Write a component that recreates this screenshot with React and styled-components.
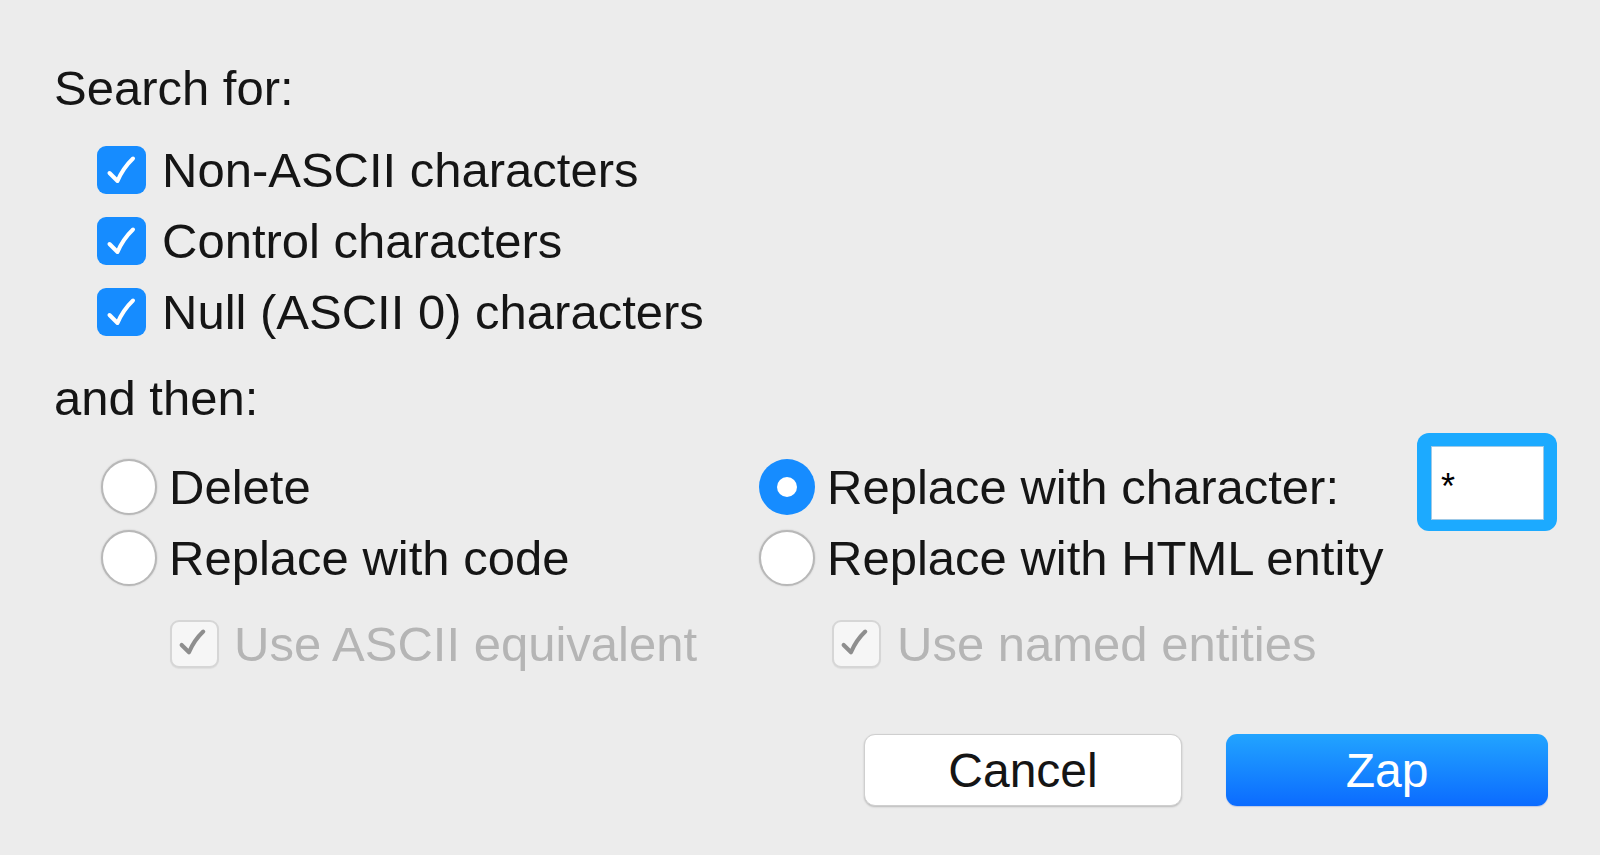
import React from 'react';
import styled, { createGlobalStyle } from 'styled-components';

const GlobalStyle = createGlobalStyle`
  html, body {
    margin: 0;
    padding: 0;
    background: #ececec;
  }
  body {
    font-family: 'Liberation Sans', Arial, Helvetica, sans-serif;
    color: #151515;
    -webkit-font-smoothing: antialiased;
  }
`;

const Dialog = styled.div`
  width: 1600px;
  height: 855px;
  box-sizing: border-box;
  padding: 60px 52px 0 54px;
  font-size: 49px;
`;

const SectionLabel = styled.div`
  height: 56px;
  line-height: 56px;
  margin-top: ${(p) => p.$top || 0}px;
`;

const CheckList = styled.div`
  margin: 18px 0 0 43px;
  display: flex;
  flex-direction: column;
`;

const Row = styled.label`
  display: flex;
  align-items: center;
  height: 71px;
  gap: ${(p) => p.$gap || 16}px;
  margin-top: ${(p) => p.$top || 0}px;
  margin-left: ${(p) => p.$indent || 0}px;
  color: ${(p) => (p.$disabled ? '#b5b5b5' : '#151515')};
  white-space: nowrap;
`;

const Box = styled.span`
  width: 49px;
  height: 48px;
  flex: none;
  box-sizing: border-box;
  border-radius: 9px;
  display: flex;
  align-items: center;
  justify-content: center;
  background: ${(p) => (p.$disabled ? '#f6f6f6' : '#168cff')};
  border: ${(p) => (p.$disabled ? '2px solid #d6d6d6' : 'none')};
  box-shadow: ${(p) => (p.$disabled ? '0 1px 1px rgba(0,0,0,0.06)' : 'none')};
  svg {
    display: block;
  }
`;

const Radio = styled.span`
  width: 56px;
  height: 56px;
  flex: none;
  box-sizing: border-box;
  border-radius: 50%;
  display: flex;
  align-items: center;
  justify-content: center;
  background: ${(p) => (p.$on ? '#168cff' : '#fff')};
  border: ${(p) => (p.$on ? 'none' : '2px solid #b8b8b8')};
  box-shadow: ${(p) => (p.$on ? 'none' : '0 0 2px rgba(0,0,0,0.18)')};

  &::after {
    content: '';
    display: ${(p) => (p.$on ? 'block' : 'none')};
    width: 20px;
    height: 20px;
    border-radius: 50%;
    background: #fff;
  }
`;

const OptionsGrid = styled.div`
  margin: 25px 0 0 47px;
  display: grid;
  grid-template-columns: 658px 1fr auto;
  align-items: start;
`;

const FocusRing = styled.div`
  grid-column: 3;
  grid-row: 1;
  margin: -18px -9px -9px 0;
  padding: 13px 13px 11px 14px;
  background: #1caaff;
  border-radius: 12px;
`;

const CharInput = styled.div`
  width: 113px;
  height: 74px;
  box-sizing: border-box;
  background: #fff;
  border: 1px solid #9fc9e6;
  font-size: 36px;
  line-height: 52px;
  padding: 14px 0 0 9px;
  color: #000;
`;

const ButtonBar = styled.div`
  margin-top: 55px;
  display: flex;
  justify-content: flex-end;
  gap: 44px;
`;

const Button = styled.button`
  width: ${(p) => (p.$primary ? 322 : 318)}px;
  height: 72px;
  box-sizing: border-box;
  border-radius: 11px;
  font-family: inherit;
  font-size: 48px;
  padding: 0;
  cursor: default;
  color: ${(p) => (p.$primary ? '#fff' : '#151515')};
  background: ${(p) =>
    p.$primary ? 'linear-gradient(#22a4ff, #0b6bff)' : '#fff'};
  border: ${(p) => (p.$primary ? 'none' : '1px solid #cfcfcf')};
  box-shadow: ${(p) =>
    p.$primary ? '0 1px 1px rgba(0,60,200,0.2)' : '0 1px 2px rgba(0,0,0,0.22)'};
`;

const Check = ({ disabled }) => (
  <svg width="49" height="48" viewBox="0 0 49 48">
    <path
      d="M12.5 27 L20.5 35 Q26 22 36 12.5"
      fill="none"
      stroke={disabled ? '#8e8e8e' : '#fff'}
      strokeWidth={disabled ? 4.5 : 4}
      strokeLinecap="round"
      strokeLinejoin="round"
      transform={disabled ? 'translate(-2 -2)' : undefined}
    />
  </svg>
);

const CheckRow = ({ children, disabled, ...rest }) => (
  <Row $disabled={disabled} {...rest}>
    <Box $disabled={disabled}>
      <Check disabled={disabled} />
    </Box>
    {children}
  </Row>
);

const RadioRow = ({ children, on, ...rest }) => (
  <Row $gap={12} {...rest}>
    <Radio $on={on} />
    {children}
  </Row>
);

export default function App() {
  return (
    <>
      <GlobalStyle />
      <Dialog>
        <SectionLabel>Search for:</SectionLabel>
        <CheckList>
          <CheckRow>Non-ASCII characters</CheckRow>
          <CheckRow>Control characters</CheckRow>
          <CheckRow>Null (ASCII 0) characters</CheckRow>
        </CheckList>

        <SectionLabel $top={23}>and then:</SectionLabel>
        <OptionsGrid>
          <RadioRow>Delete</RadioRow>
          <RadioRow on>Replace with character:</RadioRow>
          <FocusRing>
            <CharInput>*</CharInput>
          </FocusRing>
          <RadioRow>Replace with code</RadioRow>
          <RadioRow>Replace with HTML entity</RadioRow>
          <div />
          <CheckRow disabled $indent={69} $top={15} $gap={15}>
            Use ASCII equivalent
          </CheckRow>
          <CheckRow disabled $indent={73} $top={15} $gap={16}>
            Use named entities
          </CheckRow>
        </OptionsGrid>

        <ButtonBar>
          <Button>Cancel</Button>
          <Button $primary>Zap</Button>
        </ButtonBar>
      </Dialog>
    </>
  );
}
